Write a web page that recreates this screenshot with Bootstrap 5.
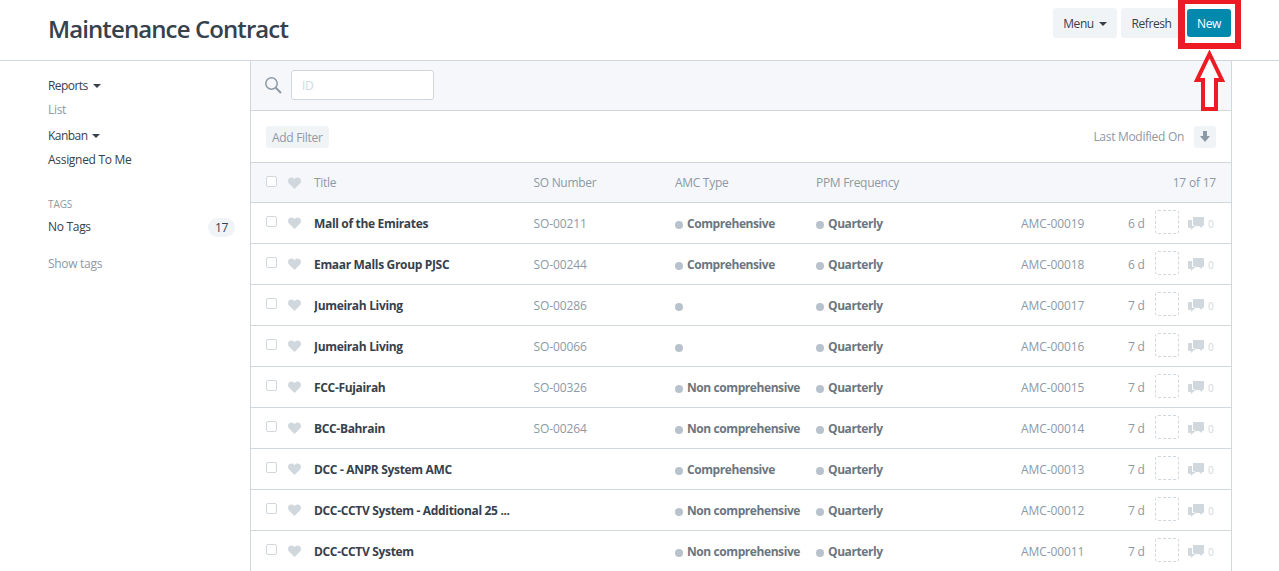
<!DOCTYPE html>
<html lang="en"><head><meta charset="utf-8"><title>Maintenance Contract</title>
<link href="https://cdn.jsdelivr.net/npm/bootstrap@5.3.0/dist/css/bootstrap.min.css" rel="stylesheet">
<style>
html,body{height:571px;overflow:hidden}
body{font-family:"Open Sans","Noto Sans",sans-serif;font-size:12px;letter-spacing:-.3px;color:#36414c;background:#fff}
.head-bar{height:61px;border-bottom:1px solid #d1d8dd;padding:0 48px;position:relative}
.head-title{font-size:24px;font-weight:600;letter-spacing:-.9px;line-height:1;margin:0;padding-top:17px;color:#36414c}
.head-btns{padding-top:8px;gap:4px}
.act-btn{font-size:12px;letter-spacing:-.4px;line-height:18px;padding:7px 0 5px;height:30px;background:#f0f4f7;border:0;border-radius:3px;color:#36414c}
.act-menu{width:64px}
.act-refresh{width:61px}
.act-new{width:44px;background:#0089ad;color:#fff;height:28px;margin:1px 0 0 1px;padding:6px 0 4px;font-weight:500}
.act-new:hover{background:#0089ad;color:#fff}
.caret-mini{display:inline-block;border:4px solid transparent;border-top-color:#36414c;border-bottom:0;margin-left:5px;vertical-align:2px}
.main-wrap{display:flex;padding-left:48px;width:1232px}
.side-col{width:202px;flex:none;padding-top:13px}
.side-item{height:24px;line-height:24px;white-space:nowrap}
.side-drop{letter-spacing:-.55px}
.side-item.muted-i{color:#8d99a6}
.gap-kanban{margin-top:2px}
.side-tags{font-size:10px;letter-spacing:-.1px;color:#8d99a6;margin-top:22px;line-height:14px;height:19px;padding-top:3px}
.side-tagrow{margin-top:2px}
.count-pill{background:#f0f4f7;border-radius:10px;width:27px;height:19px;line-height:19px;text-align:center;margin-right:15px}
.side-show{margin-top:13px}
.list-col{width:982px;flex:none;border-left:1px solid #d1d8dd;border-right:1px solid #d1d8dd}
.search-bar{height:50px;background:#f5f7fa;border-bottom:1px solid #d1d8dd;display:flex;align-items:flex-start;padding:9px 0 0 14px;gap:9px}
.search-svg{margin-top:7px}
.id-input{width:143px;height:30px;border:1px solid #d1d8dd;border-radius:3px;background:#fff;color:#d1d8dd;padding:0 10px;line-height:30px}
.filter-bar{height:52px;border-bottom:1px solid #d1d8dd;display:flex;align-items:center;justify-content:space-between;padding:0 15px}
.filter-btn{background:#f0f4f7;color:#8d99a6;border-radius:3px;height:22px;line-height:24px;padding:0 6px}
.sort-txt{color:#8d99a6;padding-top:1px}
.sort-btn{background:#f0f4f7;border-radius:3px;width:22px;height:22px;margin-left:10px;display:flex;align-items:center;justify-content:center}
.list-row{display:flex;align-items:center;height:41px;border-bottom:1px solid #d1d8dd;white-space:nowrap;color:#8d99a6;padding-left:15px;position:relative}
.list-row.head-row{height:40px;background:#f5f7fa}
.list-row>span:not(.chk-box):not(.assign-box){padding-top:2px}
.head-row>span:not(.chk-box){padding-top:1px!important}
.chk-box{width:11px;height:11px;border:1px solid #d1d8dd;border-radius:2px;background:#fff;flex:none;margin-right:11px;position:relative;top:-1.5px}
.heart-i{width:13px;flex:none;margin-right:13px;display:block}
.c-title{width:219.5px;flex:none;color:#36414c;font-weight:700;letter-spacing:-.33px;overflow:hidden}
.head-row .c-title{color:#8d99a6;font-weight:400;letter-spacing:-.3px}
.c-so{width:141.5px;flex:none;letter-spacing:-.12px}
.head-row .c-so{letter-spacing:-.3px}
.c-amc{width:141px;flex:none;color:#6c7680;font-weight:700;letter-spacing:-.42px}
.head-row .c-amc,.head-row .c-ppm{color:#8d99a6;font-weight:400;letter-spacing:-.3px}
.c-ppm{width:205px;flex:none;color:#6c7680;font-weight:700;letter-spacing:-.42px}
.c-id{width:107px;flex:none;letter-spacing:-.1px}
.c-age{width:27px;flex:none;color:#8d99a6}
.c-total{margin-left:auto;padding-right:15px;letter-spacing:-.2px}
.dot-i{display:inline-block;width:8px;height:8px;border-radius:50%;background:#b8c2cc;margin-right:4px;vertical-align:-0.5px}
.assign-box{width:24px;height:24px;border:1px dashed #d1d8dd;border-radius:3px;flex:none;margin-right:9px;position:relative;top:-1px}
.comment-i{flex:none;margin-right:4px;display:block;position:relative;top:1px}
.comment-n{font-size:10px;color:#d1d8dd;flex:none}
.ann-box{position:absolute;left:1178px;top:0;width:63px;height:49px;border:solid #ed1c24;border-width:4px 6px 6px 7px;pointer-events:none}
.ann-arrow{position:absolute;left:1194px;top:50px}
</style></head><body>
<div class="head-bar d-flex justify-content-between align-items-start">
<h1 class="head-title">Maintenance Contract</h1>
<div class="d-flex head-btns">
<button class="btn act-btn act-menu">Menu<span class="caret-mini"></span></button>
<button class="btn act-btn act-refresh">Refresh</button>
<button class="btn act-btn act-new">New</button>
</div></div>
<div class="ann-box"></div>
<svg class="ann-arrow" width="32" height="62" viewBox="0 0 32 62"><path d="M15.500 4 L28 30 H22 V59 H9 V30 H3 Z" fill="#fff" stroke="#ed1c24" stroke-width="4"/></svg>
<div class="main-wrap">
<div class="side-col">
<div class="side-item side-drop">Reports<span class="caret-mini"></span></div>
<div class="side-item muted-i">List</div>
<div class="side-item side-drop gap-kanban">Kanban<span class="caret-mini"></span></div>
<div class="side-item">Assigned To Me</div>
<div class="side-tags">TAGS</div>
<div class="d-flex justify-content-between align-items-center side-item side-tagrow"><span>No Tags</span><span class="count-pill">17</span></div>
<div class="side-item muted-i side-show">Show tags</div>
</div>
<div class="list-col" id="lc">
<div class="search-bar">
<svg class="search-svg" width="17" height="17" viewBox="0 0 17 17"><circle cx="6.500" cy="6.500" r="5.700" fill="none" stroke="#8d99a6" stroke-width="1.500"/><path d="M10.500 10.500l5.500 5.500" stroke="#8d99a6" stroke-width="2"/></svg>
<div class="id-input">ID</div></div>
<div class="filter-bar"><div class="filter-btn">Add Filter</div>
<div class="d-flex align-items-center"><span class="sort-txt">Last Modified On</span><span class="sort-btn"><svg width="10" height="11" viewBox="0 0 10 11"><path d="M3 0h4v5h3l-5 6-5-6h3z" fill="#8d99a6"/></svg></span></div></div>
<div class="list-row head-row"><span class="chk-box"></span><svg class="heart-i" viewBox="0 0 13 12" height="12"><path d="M6.500 12 1 6.500C-.5 4.800-.2 2 1.500 1c1.800-1 3.800-.6 5 1 1.200-1.600 3.200-2 5-1 1.700 1 2 3.800.5 5.500z" fill="#d1d8dd"/></svg><span class="c-title">Title</span><span class="c-so">SO Number</span><span class="c-amc">AMC Type</span><span class="c-ppm">PPM Frequency</span><span class="c-total">17 of 17</span></div>
<div id="rows"></div>
</div></div>
<script>
var d=[["Mall of the Emirates","SO-00211","Comprehensive","AMC-00019","6 d"],["Emaar Malls Group PJSC","SO-00244","Comprehensive","AMC-00018","6 d"],["Jumeirah Living","SO-00286","","AMC-00017","7 d"],["Jumeirah Living","SO-00066","","AMC-00016","7 d"],["FCC-Fujairah","SO-00326","Non comprehensive","AMC-00015","7 d"],["BCC-Bahrain","SO-00264","Non comprehensive","AMC-00014","7 d"],["DCC - ANPR System AMC","","Comprehensive","AMC-00013","7 d"],["DCC-CCTV System - Additional 25 ...","","Non comprehensive","AMC-00012","7 d"],["DCC-CCTV System","","Non comprehensive","AMC-00011","7 d"]];
var heart='<svg class="heart-i" viewBox="0 0 13 12" height="12"><path d="M6.500 12 1 6.500C-.5 4.800-.2 2 1.500 1c1.800-1 3.800-.6 5 1 1.200-1.600 3.200-2 5-1 1.700 1 2 3.800.5 5.500z" fill="#d1d8dd"/></svg>';
var cm='<svg class="comment-i" width="16" height="14" viewBox="0 0 16 14"><path d="M5 0h10a1 1 0 0 1 1 1v7a1 1 0 0 1-1 1h-1v2l-3-2H8l-3-1z" fill="#d1d8dd"/><path d="M0 4a1 1 0 0 1 1-1h3v6h4l-3 2-2 2v-2H1a1 1 0 0 1-1-1z" fill="#d1d8dd"/></svg>';
document.getElementById('rows').innerHTML=d.map(function(r){return '<div class="list-row"><span class="chk-box"></span>'+heart+'<span class="c-title">'+r[0]+'</span><span class="c-so">'+r[1]+'</span><span class="c-amc"><span class="dot-i"></span>'+r[2]+'</span><span class="c-ppm"><span class="dot-i"></span>Quarterly</span><span class="c-id">'+r[3]+'</span><span class="c-age">'+r[4]+'</span><span class="assign-box"></span>'+cm+'<span class="comment-n">0</span></div>'}).join('');
</script>
<script src="https://cdn.jsdelivr.net/npm/bootstrap@5.3.0/dist/js/bootstrap.bundle.min.js"></script>
</body></html>
